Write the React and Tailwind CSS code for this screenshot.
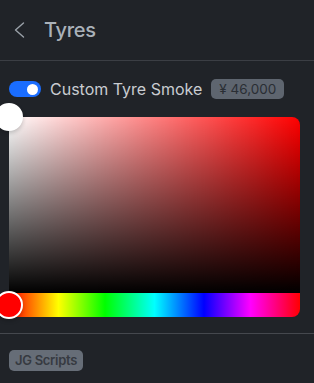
import React from 'react'

function Toggle() {
    return (
        <div className="w-8 h-4 rounded-full bg-[#1a6dff] flex items-center justify-end pr-[3px] shrink-0">
            <div className="w-[11px] h-[11px] rounded-full bg-white" />
        </div>
    )
}

function ColorPicker() {
    return (
        <div className="relative w-[291px] flex flex-col">
            <div className="relative h-[176px] rounded-t-[8px] bg-[#ff0000] bg-[linear-gradient(to_top,#000,rgba(0,0,0,0)),linear-gradient(to_right,#fff,rgba(255,255,255,0))]">
                <div className="absolute left-0 top-0 -translate-x-1/2 -translate-y-1/2 w-7 h-7 rounded-full border-2 border-white bg-white shadow-[0_2px_4px_rgba(0,0,0,0.2)]" />
            </div>
            <div className="relative h-6 rounded-b-[8px] bg-[linear-gradient(to_right,#f00_0%,#ff0_17%,#0f0_33%,#0ff_50%,#00f_67%,#f0f_83%,#f00_100%)]">
                <div className="absolute left-0 top-1/2 -translate-x-1/2 -translate-y-1/2 w-7 h-7 rounded-full border-2 border-white bg-[#ff0000] shadow-[0_2px_4px_rgba(0,0,0,0.2)]" />
            </div>
        </div>
    )
}

export default function App() {
    return (
        <div className="w-[314px] h-[383px] bg-[#202328] font-['Inter','Liberation_Sans',sans-serif] overflow-hidden flex flex-col">
            <div className="h-[61px] border-b border-[#3b3e44] flex items-center pl-[13px] gap-[19px] shrink-0">
                <svg width="12" height="16" viewBox="0 0 12 16" fill="none" className="text-[#9aa1a9]">
                    <path d="M10.5 1 L2.5 8 L10.5 15" stroke="currentColor" strokeWidth="1.4" strokeLinecap="round" strokeLinejoin="round" />
                </svg>
                <span className="text-[20px] font-medium text-[#aab1b9] tracking-[-0.3px]">Tyres</span>
            </div>

            <div className="flex items-center gap-[9px] pl-[9px] h-[56px] shrink-0">
                <Toggle />
                <span className="text-[16px] text-[#c9ccd1] tracking-[0px]">Custom Tyre Smoke</span>
                <span className="h-5 px-[8px] rounded-[5px] bg-[#5e656f] text-[#2a2e34] text-[13.5px] flex items-center">¥ 46,000</span>
            </div>

            <div className="pl-[9px] shrink-0">
                <ColorPicker />
            </div>

            <div className="mt-4 border-t border-[#45484e] pt-4 pl-[9px] flex">
                <span className="flex items-center h-[21px] px-[6px] rounded-[5px] bg-[#666d77] text-[#363a41] text-[13px] font-semibold tracking-[-0.3px]">JG Scripts</span>
            </div>
        </div>
    )
}
